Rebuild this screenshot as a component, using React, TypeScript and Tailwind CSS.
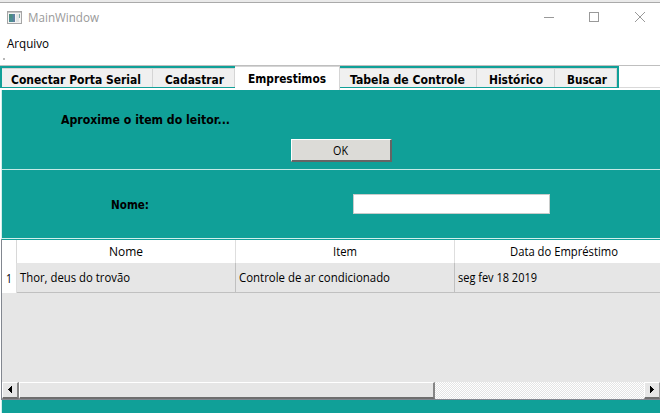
import React from "react";

const tabs = [
  { label: "Conectar Porta Serial", box: "w-[151px] pl-[9px]", width: 130 },
  { label: "Cadastrar", box: "w-[82px] pl-[12px]", width: 59 },
  { label: "Emprestimos", box: "w-[105px] pl-[13px]", width: 78, active: true },
  { label: "Tabela de Controle", box: "w-[137px] pl-[10px]", width: 115 },
  { label: "Histórico", box: "w-[78px] pl-[12px]", width: 54 },
  { label: "Buscar", box: "w-[62px] pl-[12px]", width: 40 },
];

const bold = "font-['DejaVu_Sans_Condensed','DejaVu_Sans',sans-serif] font-bold [font-stretch:condensed] text-[12px]";

function Label({ text, width, className = "" }: { text: string; width: number; className?: string }) {
  return (
    <svg width={width} height="18" className={`block shrink-0 overflow-visible ${className}`}>
      <text x="0" y="13" textLength={width} lengthAdjust="spacingAndGlyphs" fill="currentColor">{text}</text>
    </svg>
  );
}

function TitleBar() {
  return (
    <div className="flex h-[30px] shrink-0 items-center pl-[7px] text-[#999]">
      <svg className="-mt-[2px]" width="15" height="13" shapeRendering="crispEdges">
        <rect x=".5" y=".5" width="14" height="12" fill="#f4f4f4" stroke="#a5a5a5" />
        <path d="M1 1.5h13" stroke="#c6c6c6" />
        <rect x="2" y="3" width="6" height="8" fill="#4b8d91" />
        <rect x="2" y="3" width="3" height="4" fill="#4a8c80" />
        <rect x="6" y="3" width="2" height="8" fill="#5f7fa0" />
        <rect x="9" y="3" width="3" height="8" fill="#e2e5e5" />
        <rect x="12" y="3" width="1" height="4" fill="#7fa9a4" />
      </svg>
      <Label text="MainWindow" width={71} className="ml-[6px] text-[12px]" />
      <svg className="ml-auto mr-[13px] mt-[-2px]" width="103" height="12" fill="none" stroke="#999" shapeRendering="crispEdges">
        <path d="M0 6.5h10M45.5 1.5h9v9h-9z" />
        <path d="M91 1l10 10M101 1l-10 10" shapeRendering="auto" />
      </svg>
    </div>
  );
}

function TabBar() {
  return (
    <div className="flex h-6 shrink-0">
      <div className="flex h-[22px] w-[619px] border-y border-l border-[#10a098] bg-[#10a098] pl-px pr-[2px] pt-px">
        {tabs.map((t) => (
          <div
            key={t.label}
            className={`flex shrink-0 border-r border-t border-[#d5d5d5] ${bold} ${t.box} ${
              t.active ? "z-10 mt-[-2px] h-6 bg-white pt-[3px]" : "h-[19px] bg-[#f0f0f0] pt-[2px]"
            }`}
          >
            <Label text={t.label} width={t.width} />
          </div>
        ))}
      </div>
      <div className="h-[22px] grow border-b border-[#d9d9d9]" />
    </div>
  );
}

function ScrollBar() {
  const raised = "border-t border-l border-t-white border-l-white border-r-2 border-b-2 border-r-[#858585] border-b-[#6e6e6e] bg-[#e6e6e6]";
  return (
    <div className="flex h-[17px] shrink-0 bg-[repeating-conic-gradient(#e4e4e4_0_25%,#fff_0_50%)] bg-[length:2px_2px]">
      <div className={`flex w-[17px] items-center justify-center ${raised}`}>
        <svg width="5" height="8" shapeRendering="crispEdges"><path d="M4 0v7L0 3.5z" /></svg>
      </div>
      <div className={`w-[416px] ${raised}`} />
      <div className="grow" />
      <div className="flex w-4 items-center justify-center border-l border-t border-b-2 border-r border-b-[#707070] border-l-white border-r-[#999] border-t-white bg-[#e6e6e6]">
        <svg width="5" height="8" shapeRendering="crispEdges"><path d="M0 0v7l4-3.5z" /></svg>
      </div>
    </div>
  );
}

function HeaderCell({ text, width }: { text: string; width: number }) {
  return (
    <div className="flex w-[219px] shrink-0 justify-center border-r border-[#dedede] pt-[3px]">
      <Label text={text} width={width} />
    </div>
  );
}

function LoanTable() {
  return (
    <div className="flex h-[161px] shrink-0 flex-col border-b border-l border-[#828790] bg-[#e6e6e6]">
      <div className="h-px shrink-0 bg-[#10a098]" />
      <div className="flex h-[23px] shrink-0 overflow-hidden bg-white">
        <div className="w-[15px] shrink-0 border-r border-[#d8d8d8]" />
        <HeaderCell text="Nome" width={34} />
        <HeaderCell text="Item" width={24} />
        <HeaderCell text="Data do Empréstimo" width={108} />
      </div>
      <div className="flex h-[30px] shrink-0">
        <div className="flex w-[15px] justify-center border-r border-[#dedede] bg-white pt-[7px]"><Label text="1" width={6} /></div>
        <div className="w-[219px] border-b border-r border-[#c0c0c0] pl-[3px] pt-[6px]"><Label text="Thor, deus do trovão" width={110} /></div>
        <div className="w-[219px] border-b border-r border-[#c0c0c0] pl-[3px] pt-[6px]"><Label text="Controle de ar condicionado" width={151} /></div>
        <div className="grow border-b border-[#c0c0c0] pl-[3px] pt-[6px]"><Label text="seg fev 18 2019" width={79} /></div>
      </div>
      <div className="grow" />
      <ScrollBar />
    </div>
  );
}

export default function App() {
  return (
    <div className="flex h-[420px] w-[660px] flex-col overflow-hidden bg-white font-['Open_Sans','Noto_Sans',sans-serif] text-[12px] leading-none text-black">
      <div className="h-[3px] shrink-0 border-b border-[#aaa] bg-[#eaeaea]" />
      <TitleBar />
      <div className="h-[25px] shrink-0 pl-[7px] pt-[2px]"><Label text="Arquivo" width={42} /></div>
      <div className="h-[8px] shrink-0 border-b border-[#bfbfbf] pl-[3px]"><div className="size-[2px] bg-[#b8b8b8]" /></div>
      <TabBar />
      <div className="flex h-[323px] shrink-0 flex-col pl-px">
        <div className="flex h-[149px] shrink-0 flex-col border-b border-l border-[#d2efec] bg-[#10a098]">
          <div className="h-[80px] shrink-0 border-b border-[#c5eae6]">
            <div className={`pl-[59px] pt-[21px] ${bold}`}><Label text="Aproxime o item do leitor..." width={169} /></div>
            <div className="ml-[289px] mt-[10px] flex h-[23px] w-[101px] justify-center border-b-2 border-l border-r-2 border-t border-b-[#656565] border-l-white border-r-[#656565] border-t-white bg-[#dcdbd7] pr-[2px] pt-[2px]"><Label text="OK" width={15} /></div>
          </div>
          <div className="flex pt-[24px]">
            <div className={`w-[351px] pl-[109px] pt-[2px] ${bold}`}><Label text="Nome:" width={38} /></div>
            <div className="h-5 w-[197px] border border-[#c8cccb] bg-white" />
          </div>
        </div>
        <LoanTable />
        <div className="h-[13px] shrink-0 border-l border-[#d2efec] bg-[#10a098]" />
      </div>
    </div>
  );
}
